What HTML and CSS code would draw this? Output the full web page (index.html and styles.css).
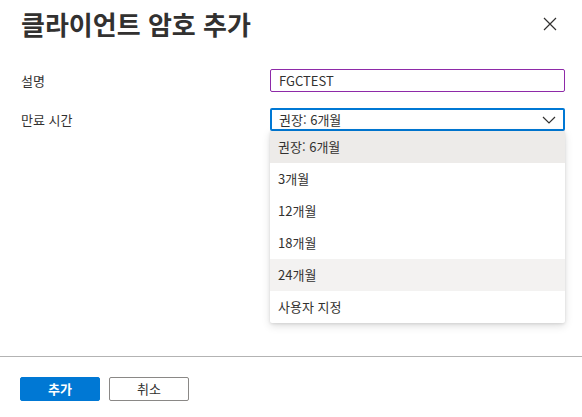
FILE: index.html
```html
<!DOCTYPE html>
<html lang="ko">
<head>
<meta charset="utf-8">
<link rel="stylesheet" href="styles.css">
</head>
<body>
<div class="panel">
  <header class="header">
    <h1 class="title">클라이언트 암호 추가</h1>
    <button class="close" aria-label="닫기">
      <svg width="14" height="14" viewBox="0 0 14 14"><path d="M1 1 L13 13 M13 1 L1 13" stroke="#323130" stroke-width="1.2" fill="none"/></svg>
    </button>
  </header>
  <div class="form">
    <div class="label">설명</div>
    <div class="control"><div class="input">FGCTEST</div></div>
    <div class="label">만료 시간</div>
    <div class="control">
      <div class="select">
        <span>권장: 6개월</span>
        <svg width="14" height="8" viewBox="0 0 14 8"><path d="M1 1 L7 7 L13 1" stroke="#323130" stroke-width="1.2" fill="none"/></svg>
      </div>
      <ul class="menu">
        <li class="item selected">권장: 6개월</li>
        <li class="item">3개월</li>
        <li class="item">12개월</li>
        <li class="item">18개월</li>
        <li class="item hover">24개월</li>
        <li class="item">사용자 지정</li>
      </ul>
    </div>
  </div>
  <footer class="footer">
    <button class="btn primary">추가</button>
    <button class="btn">취소</button>
  </footer>
</div>
</body>
</html>
```
FILE: styles.css
```css
html, body {
  margin: 0;
  padding: 0;
  background: #ffffff;
}
body {
  font-family: "Noto Sans CJK KR", "Noto Sans", sans-serif;
  color: #323130;
  font-size: 13px;
}
.panel {
  width: 582px;
  height: 417px;
  display: flex;
  flex-direction: column;
}
.header {
  display: flex;
  align-items: center;
  justify-content: space-between;
  padding: 6px 25px 0 21px;
  height: 36px;
}
.title {
  margin: 0;
  font-size: 26px;
  font-weight: 700;
  line-height: 32px;
  color: #323130;
}
.close {
  border: 0;
  background: none;
  padding: 0;
  width: 14px;
  height: 14px;
  display: flex;
}
.form {
  display: grid;
  grid-template-columns: 249px 295px;
  row-gap: 16px;
  padding: 27px 0 0 21px;
  flex: 1;
  align-content: start;
}
.label {
  line-height: 23px;
  color: #323130;
}
.control {
  position: relative;
}
.input {
  height: 23px;
  box-sizing: border-box;
  border: 1px solid #8e2aa8;
  border-radius: 2px;
  padding: 0 8px;
  line-height: 21px;
}
.select {
  height: 23px;
  box-sizing: border-box;
  border: 2px solid #0078d4;
  border-radius: 2px;
  padding: 0 7px;
  display: flex;
  align-items: center;
  justify-content: space-between;
  line-height: 19px;
}
.menu {
  position: absolute;
  left: 0;
  right: 0;
  top: 23px;
  margin: 0;
  padding: 0;
  list-style: none;
  background: #ffffff;
  border-radius: 0 0 2px 2px;
  box-shadow: 0 3px 8px rgba(0,0,0,0.13), 0 1px 3px rgba(0,0,0,0.10);
}
.item {
  height: 32px;
  line-height: 32px;
  padding: 0 8px;
  color: #323130;
}
.item.selected {
  background: #edebe9;
}
.item.hover {
  background: #f3f2f1;
}
.footer {
  border-top: 1px solid #b3b3b3;
  padding: 20px 20px 16px;
  display: flex;
  gap: 9px;
}
.btn {
  width: 80px;
  height: 24px;
  box-sizing: border-box;
  border: 1px solid #8a8886;
  border-radius: 2px;
  background: #ffffff;
  font-family: inherit;
  font-size: 13px;
  color: #323130;
  padding: 0;
  line-height: 22px;
}
.btn.primary {
  background: #0078d4;
  border-color: #0078d4;
  color: #ffffff;
  font-weight: 700;
}
```
